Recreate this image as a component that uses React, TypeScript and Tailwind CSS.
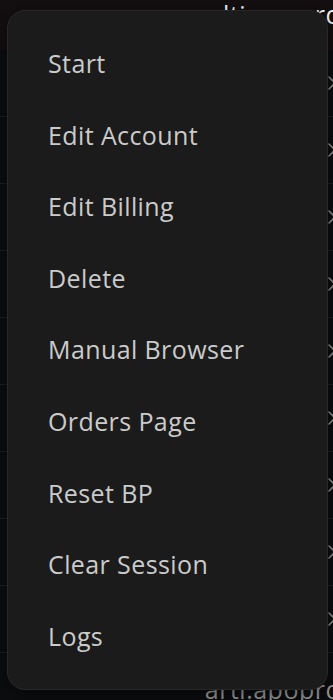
const items = [
  "Start",
  "Edit Account",
  "Edit Billing",
  "Delete",
  "Manual Browser",
  "Orders Page",
  "Reset BP",
  "Clear Session",
  "Logs",
];

function Chevron() {
  return (
    <svg width="10" height="16" viewBox="0 0 10 16" fill="none" stroke="#8f8f8f" strokeWidth="1.6" strokeLinecap="round" strokeLinejoin="round">
      <path d="M2 2l6 6-6 6" />
    </svg>
  );
}

export default function App() {
  return (
    <div className="relative w-[333px] h-[700px] overflow-hidden bg-[#0c0d0f] font-['Open_Sans',sans-serif]">
      {/* header behind the menu */}
      <div className="h-[50px] bg-[#140f10] flex items-start justify-end overflow-hidden">
        <span className="text-[25px] leading-[25px] text-white mt-[2px] mr-[-8px] tracking-[0.5px] whitespace-nowrap">
          multi.apopro
        </span>
      </div>

      {/* list rows behind the menu */}
      <div className="flex flex-col">
        {Array.from({ length: 9 }).map((_, i) => (
          <div key={i} className="h-[67px] border-b border-[#1e1f22] flex items-center justify-end -mr-[4px]">
            <Chevron />
          </div>
        ))}
      </div>
      <div className="flex justify-end pt-[24px]">
        <span className="text-[25px] leading-[25px] text-[#9c9c9c] mr-[-8px] tracking-[0.5px] whitespace-nowrap">
          arti.apopro
        </span>
      </div>

      {/* context menu */}
      <div className="absolute left-[7px] top-[10px] w-[321px] h-[680px] rounded-[18px] bg-[#1b1b1b] border border-[#282828] shadow-[0_4px_20px_rgba(0,0,0,0.5)] py-[17px]">
        {items.map((label) => (
          <div key={label} className="h-[71.6px] flex items-center pl-[40px] text-[25px] tracking-[0.4px] text-[#cbcbcb]">
            {label}
          </div>
        ))}
      </div>
    </div>
  );
}
